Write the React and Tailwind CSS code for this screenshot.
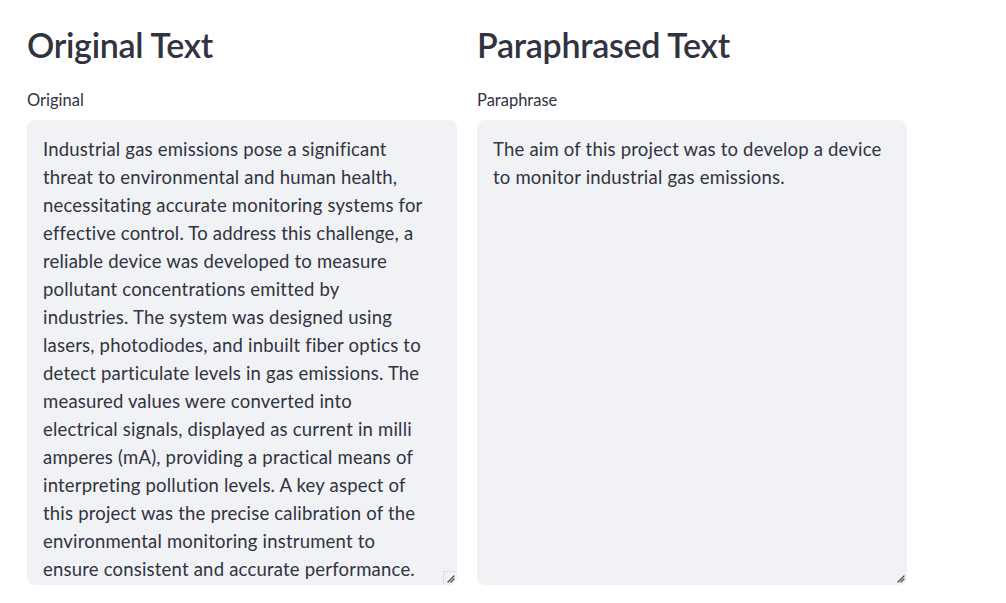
import React from 'react';

const originalLines = [
  'Industrial gas emissions pose a significant',
  'threat to environmental and human health,',
  'necessitating accurate monitoring systems for',
  'effective control. To address this challenge, a',
  'reliable device was developed to measure',
  'pollutant concentrations emitted by',
  'industries. The system was designed using',
  'lasers, photodiodes, and inbuilt fiber optics to',
  'detect particulate levels in gas emissions. The',
  'measured values were converted into',
  'electrical signals, displayed as current in milli',
  'amperes (mA), providing a practical means of',
  'interpreting pollution levels. A key aspect of',
  'this project was the precise calibration of the',
  'environmental monitoring instrument to',
  'ensure consistent and accurate performance.',
];

const paraphraseLines = [
  'The aim of this project was to develop a device',
  'to monitor industrial gas emissions.',
];

function Grip({ corner }) {
  return (
    <div className="absolute bottom-0 right-0 w-[14px] h-[14px]">
      {corner && <div className="absolute inset-0 border-l border-t border-[#dcdde2] bg-[#f0f2f6]" />}
      <svg className="absolute inset-0" width="14" height="14" viewBox="0 0 14 14">
        <path d="M5 11 L11 5 M8 11 L11 8" stroke="#555" strokeWidth="1.4" strokeLinecap="round" />
      </svg>
    </div>
  );
}

function Column({ title, label, lines, corner }) {
  return (
    <div className="w-[430px] flex flex-col">
      <h2 className="text-[34px] font-semibold leading-[1.2] text-[#31333f] tracking-[-0.3px] pt-[25px]">{title}</h2>
      <div className="text-[16.5px] text-[#31333f] mt-[24px] leading-[20px]">{label}</div>
      <div className="relative mt-[10px] h-[465px] rounded-lg bg-[#f0f2f6] px-4 pt-[15px] overflow-hidden">
        {lines.map((l, i) => (
          <div key={i} className="whitespace-nowrap text-[18.5px] tracking-[0.2px] leading-[28px] text-[#31333f]">{l}</div>
        ))}
        <Grip corner={corner} />
      </div>
    </div>
  );
}

export default function App() {
  return (
    <div className="w-[1006px] h-[603px] bg-white overflow-hidden font-['Lato','Liberation_Sans',sans-serif]">
      <div className="flex gap-5 pl-[27px]">
        <Column title="Original Text" label="Original" lines={originalLines} corner />
        <Column title="Paraphrased Text" label="Paraphrase" lines={paraphraseLines} />
      </div>
    </div>
  );
}
